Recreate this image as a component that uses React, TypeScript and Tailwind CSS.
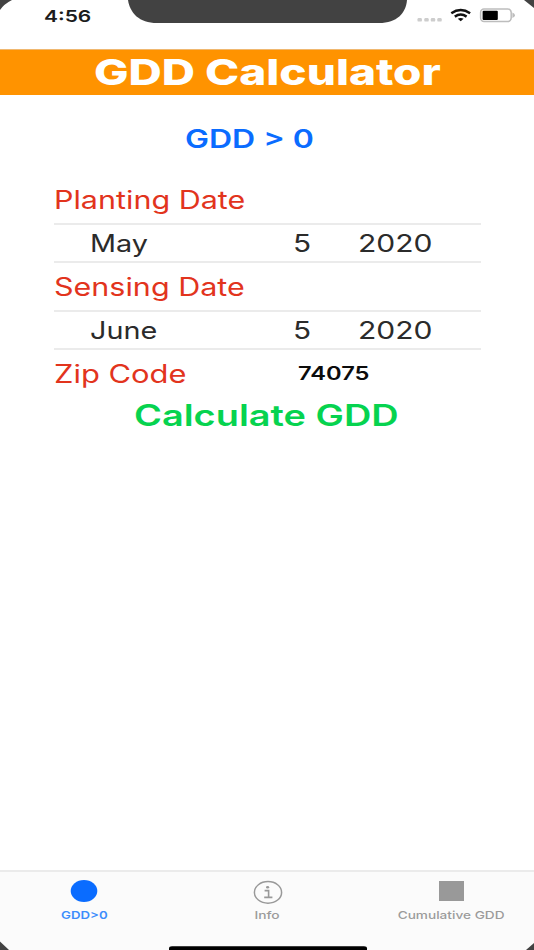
import type { ReactNode } from "react";

function Wide({ className, children }: { className: string; children: ReactNode }) {
  return <span className={`inline-block whitespace-nowrap ${className}`}>{children}</span>;
}

function StatusBar() {
  return (
    <header className="relative h-[49px] shrink-0 pt-[4px] flex items-start">
      <Wide className="w-[46px] ml-[44px] h-6 text-[16.5px] leading-6 font-semibold text-[#1c1c1c] origin-left scale-x-[1.27]">
        4:56
      </Wide>
      <svg className="absolute inset-0" width="534" height="49" viewBox="0 0 534 49">
        <path d="M0 0H12Q4 4 0 10Z" fill="#424242" />
        <path d="M534 0H524L534 8Z" fill="#424242" />
        <path d="M128 0C130 13 139 23 157 23H379C397 23 406 13 407 0Z" fill="#424242" />
        {/* signal */}
        <g fill="#cdcdcd">
          <rect x="417.5" y="18" width="4.4" height="3.6" rx="1.2" />
          <rect x="424.3" y="18" width="4.4" height="3.6" rx="1.2" />
          <rect x="430.8" y="18" width="4.4" height="3.6" rx="1.2" />
          <rect x="437.3" y="18" width="4.4" height="3.6" rx="1.2" />
        </g>
        {/* wifi */}
        <g fill="none" stroke="#111" strokeWidth="2.5">
          <path d="M451.3 13.3Q460.7 6.9 470.1 13.3" />
          <path d="M454.8 16.6Q460.7 12.6 466.6 16.6" />
        </g>
        <path d="M457.8 18.8Q460.7 17 463.6 18.8L460.7 21.2Z" fill="#111" />
        {/* battery */}
        <rect x="480.6" y="9.1" width="30.6" height="12.4" rx="3.4" fill="#fff" stroke="#bdbdbd" strokeWidth="1.5" />
        <rect x="482.6" y="10.7" width="15.2" height="9.2" rx="1" fill="#000" />
        <path d="M512.4 12.6Q515 13.6 515 15.3T512.4 18Z" fill="#bdbdbd" />
      </svg>
    </header>
  );
}

function DateRow({ month, day, year }: { month: string; day: string; year: string }) {
  return (
    <div className="h-[40px] -mt-px border-y-2 border-[#ebebeb] flex items-center pt-px text-[24px] leading-9 text-[#2b2b2b]">
      <div className="w-[239px] pl-[36px]">
        <Wide className="origin-left scale-x-[1.2]">{month}</Wide>
      </div>
      <div className="w-[65px]">
        <Wide className="origin-left scale-x-[1.24]">{day}</Wide>
      </div>
      <div>
        <Wide className="origin-left scale-x-[1.25]">{year}</Wide>
      </div>
    </div>
  );
}

function TabBar() {
  return (
    <nav className="relative h-[80px] shrink-0 border-t-2 border-[#ebebeb] bg-[#fbfbfb] flex text-[11px] leading-4 font-medium text-[#9b9b9b]">
      <div className="w-[168px] shrink-0 flex flex-col items-center text-[#3c8dfb]">
        <svg className="mt-[8px]" width="28" height="24" viewBox="0 0 28 24">
          <ellipse cx="14" cy="11" rx="13.3" ry="11" fill="#0a6cff" />
        </svg>
        <Wide className="mt-[3px] font-semibold scale-x-[1.2]">GDD&gt;0</Wide>
      </div>
      <div className="w-[199px] shrink-0 flex flex-col items-center">
        <svg className="mt-[8px]" width="32" height="24" viewBox="0 0 32 24">
          <ellipse cx="16" cy="12.4" rx="13.6" ry="10.8" fill="none" stroke="#999" strokeWidth="1.5" />
          <ellipse cx="15.6" cy="7.2" rx="1.6" ry="1.3" fill="#999" />
          <path d="M12.6 10.6H16.6V17.4M12.2 17.4H20.4" fill="none" stroke="#999" strokeWidth="1.6" />
        </svg>
        <Wide className="mt-[3px] scale-x-[1.25]">Info</Wide>
      </div>
      <div className="w-[169px] shrink-0 flex flex-col items-center">
        <div className="mt-[9px] mb-[3px] w-[25px] h-[20px] bg-[#999]" />
        <Wide className="mt-[3px] scale-x-[1.24]">Cumulative GDD</Wide>
      </div>
      <svg className="absolute bottom-0 left-0" width="534" height="10" viewBox="0 0 534 10">
        <path d="M0 1.5L9 10H0Z" fill="#424242" />
        <path d="M534 3L526 10H534Z" fill="#424242" />
        <path d="M169 10V8.5Q169 6.3 172 6.3H364Q367 6.3 367 8.5V10Z" fill="#000" />
      </svg>
    </nav>
  );
}

export default function App() {
  return (
    <div className="w-[534px] h-[950px] overflow-hidden bg-white flex flex-col font-[Inter,sans-serif]">
      <StatusBar />
      <h1 className="h-[46px] shrink-0 bg-[#ff9300] border-t border-[#f0b870] pl-[94px] text-[36px] leading-[45px] font-extrabold text-white">
        <Wide className="origin-left scale-x-[1.277]">GDD Calculator</Wide>
      </h1>

      <main className="flex-1 pt-[24px] pl-[54px] pr-[53px] text-[25px] leading-10 text-[#e2341d]">
        <h2 className="pl-[131px] h-10 font-semibold text-[#0a6cff]">
          <Wide className="origin-left scale-x-[1.28]">GDD &gt; 0</Wide>
        </h2>
        <div className="mt-[21px] h-[44px]">
          <Wide className="origin-left scale-x-[1.22]">Planting Date</Wide>
        </div>
        <DateRow month="May" day="5" year="2020" />
        <div className="mt-[4px] h-[44px]">
          <Wide className="origin-left scale-x-[1.22]">Sensing Date</Wide>
        </div>
        <DateRow month="June" day="5" year="2020" />
        <div className="mt-[4px] h-[40px] flex">
          <div className="w-[244px]">
            <Wide className="origin-left scale-x-[1.235]">Zip Code</Wide>
          </div>
          <Wide className="text-[18.5px] leading-[38px] font-semibold text-[#0c0c0c] origin-left scale-x-[1.28]">74075</Wide>
        </div>
        <button className="block ml-[80px] mt-px h-10 text-[29.5px] font-semibold text-[#06d34f]">
          <Wide className="origin-left scale-x-[1.285]">Calculate GDD</Wide>
        </button>
      </main>

      <TabBar />
    </div>
  );
}
